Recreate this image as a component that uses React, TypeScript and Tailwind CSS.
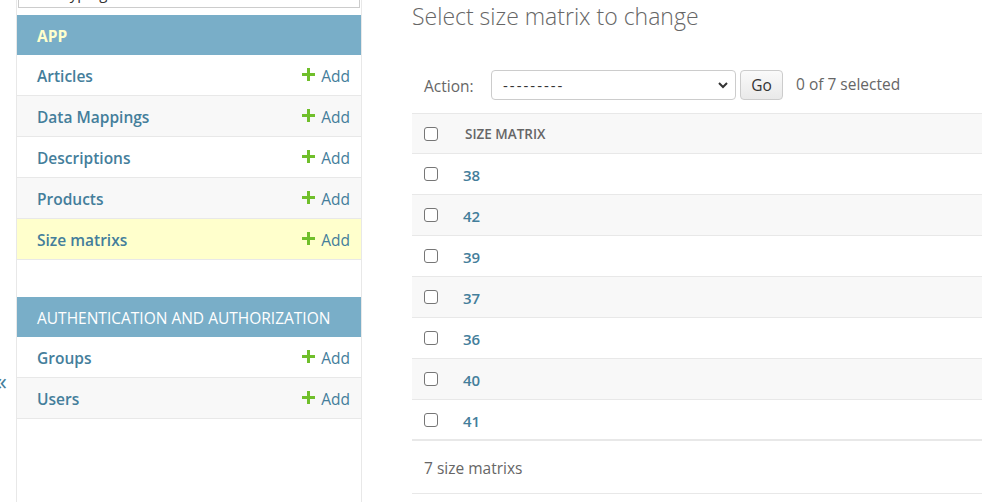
import React from "react";

const font = { fontFamily: '"Open Sans", "Noto Sans", sans-serif' };

function PlusIcon() {
  return (
    <svg width="13" height="13" viewBox="0 0 13 13" className="shrink-0 -mt-[6px]">
      <path d="M5 0h3v5h5v3H8v5H5V8H0V5h5z" fill="#70bf2b" />
    </svg>
  );
}

function ModelRow({ name, alt, current }: { name: string; alt?: boolean; current?: boolean }) {
  const bg = current ? "bg-[#ffffcc]" : alt ? "bg-[#f8f8f8]" : "bg-white";
  return (
    <div className={`flex h-[41px] items-center justify-between border-b border-[#e8e8e8] pl-5 pr-[11px] pt-[4px] ${bg}`}>
      <span className="text-[15.5px] font-semibold text-[#447e9b]">{name}</span>
      <span className="flex items-center gap-[6px] text-[15.5px] text-[#447e9b]">
        <PlusIcon />
        Add
      </span>
    </div>
  );
}

function Checkbox() {
  return <span className="block h-[14px] w-[14px] rounded-[3px] border border-[#767676] bg-white" />;
}

const rows = ["38", "42", "39", "37", "36", "40", "41"];

export default function App() {
  return (
    <div className="flex min-h-[502px] overflow-hidden bg-white text-[#333]" style={font}>
      {/* collapse toggle, partly scrolled out */}
      <div className="w-[17px] shrink-0 overflow-hidden border-r border-[#e8e8e8] pt-[369px]">
        <span className="-ml-[5px] block text-[24px] leading-none text-[#447e9b]">«</span>
      </div>

      {/* app list */}
      <div className="w-[345px] shrink-0 border-r border-[#e8e8e8]">
        <div className="h-[8px] overflow-hidden">
          <div className="-mt-[22px] ml-[1px] mr-[1px] h-[30px] border border-[#cccccc] px-2 text-[15px] leading-[28px] text-[#333]">
            Start typing to filter...
          </div>
        </div>
        <div className="mt-[7px]">
          <div className="flex h-[40px] items-center bg-[#79aec8] pl-5 pt-[3px] text-[15.5px] font-bold uppercase text-[#ffffcc]">
            App
          </div>
          <ModelRow name="Articles" />
          <ModelRow name="Data Mappings" alt />
          <ModelRow name="Descriptions" />
          <ModelRow name="Products" alt />
          <ModelRow name="Size matrixs" current />
        </div>
        <div className="mt-[37px]">
          <div className="flex h-[40px] items-center bg-[#79aec8] pl-5 pt-[3px] text-[15.5px] uppercase text-white">
            Authentication and Authorization
          </div>
          <ModelRow name="Groups" />
          <ModelRow name="Users" alt />
        </div>
      </div>

      {/* content */}
      <div className="min-w-0 flex-1 pl-[50px]">
        <h1 className="pt-[1px] text-[23px] font-light leading-[30px] text-[#666]">Select size matrix to change</h1>

        <div className="mt-[39px] flex h-[30px] items-center">
          <span className="ml-3 mt-[3px] w-[67px] text-[15.5px] text-[#666]">Action:</span>
          <div className="flex h-[30px] w-[245px] items-center justify-between rounded-[4px] border border-[#cccccc] bg-white pl-[11px] pr-[6px]">
            <span className="text-[15px] tracking-[2px] text-[#333]">---------</span>
            <svg width="12" height="12" viewBox="0 0 12 12">
              <path d="M2 4l4 4 4-4" fill="none" stroke="#333" strokeWidth="2" />
            </svg>
          </div>
          <div className="ml-[4px] flex h-[30px] w-[43px] items-center justify-center rounded-[4px] border border-[#cccccc] bg-gradient-to-b from-[#fafafa] to-[#e9e9e9] pt-[2px] text-[15.5px] text-[#333]">
            Go
          </div>
          <span className="ml-[13px] -mt-[1px] text-[15.5px] text-[#666]">0 of 7 selected</span>
        </div>

        <div className="mt-[13px] w-[600px]">
          <div className="flex h-[41px] items-center border-y border-[#e8e8e8] bg-[#f8f8f8] pl-3">
            <Checkbox />
            <span className="ml-[27px] mt-[2px] text-[13.5px] font-semibold uppercase text-[#666]">Size matrix</span>
          </div>
          {rows.map((r, i) => (
            <div
              key={r}
              className={`flex h-[41px] items-center pl-3 ${i % 2 === 1 ? "bg-[#f8f8f8]" : "bg-white"} ${
                i === rows.length - 1 ? "border-b-2" : "border-b"
              } border-[#e8e8e8]`}
            >
              <Checkbox />
              <span className="ml-[25px] mt-[3px] text-[15px] font-semibold text-[#447e9b]">{r}</span>
            </div>
          ))}
          <div className="flex h-[53px] items-center border-b border-[#e8e8e8] pl-3 pt-[3px] text-[15.5px] text-[#666]">
            7 size matrixs
          </div>
        </div>
      </div>
    </div>
  );
}
